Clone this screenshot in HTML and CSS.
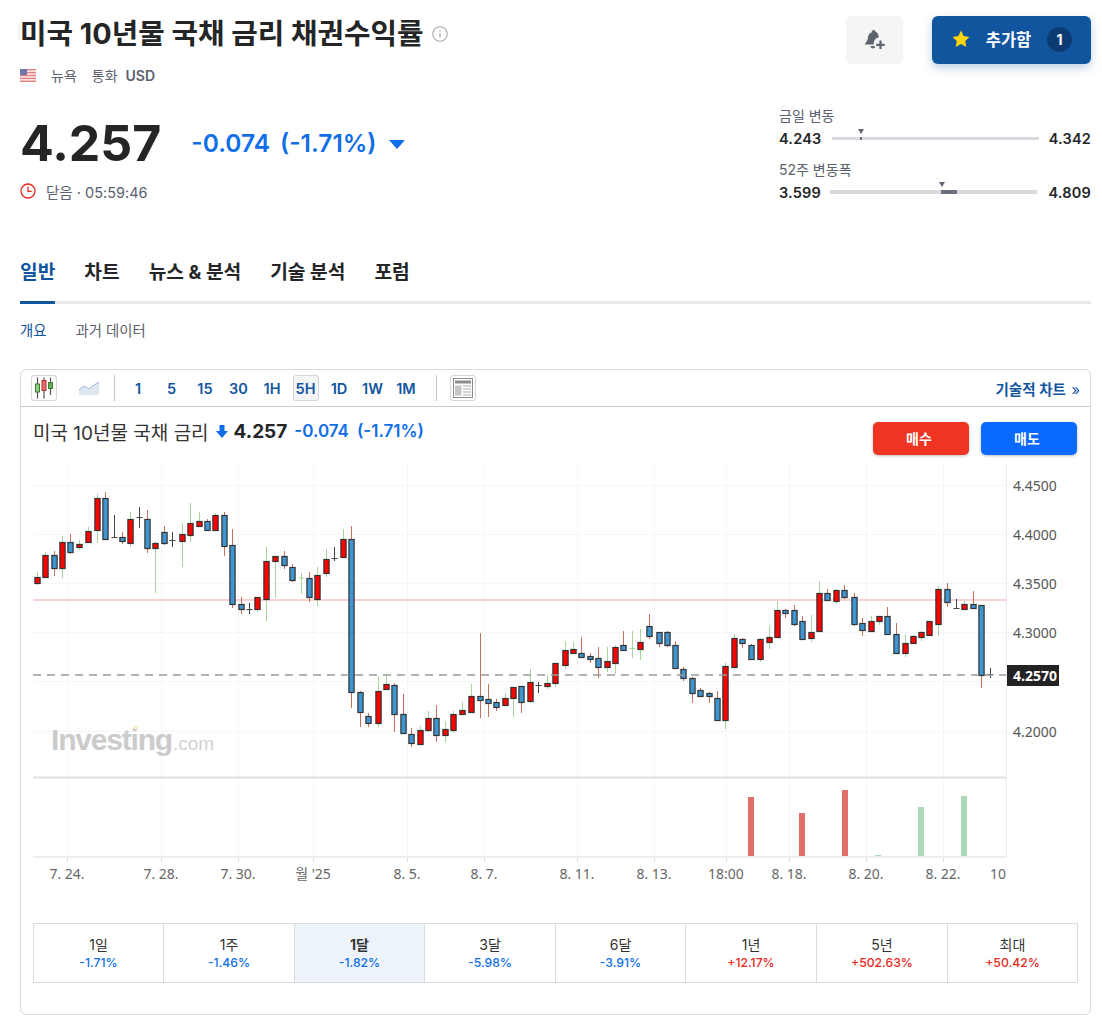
FILE: index.html
```html
<!DOCTYPE html>
<html lang="ko">
<head>
    <meta charset="UTF-8">
    <meta name="viewport" content="width=device-width, initial-scale=1.0">
    <title>미국 10년물 국채 금리 채권수익률</title>
    <link rel="stylesheet" href="styles.css">
</head>
<body>
    <div class="page">
        <header class="top">
            <div class="top-left">
                <div class="title-row">
                    <h1>미국 10년물 국채 금리 채권수익률</h1>
                    <svg class="info-icon" viewBox="0 0 16 16" width="16" height="16">
                        <circle cx="8" cy="8" r="7.2" fill="none" stroke="#a8abb2" stroke-width="1.1"/>
                        <rect x="7.4" y="7" width="1.2" height="4.8" fill="#a8abb2"/>
                        <rect x="7.4" y="4.3" width="1.2" height="1.3" fill="#a8abb2"/>
                    </svg>
                </div>
                <div class="meta-row">
                    <svg class="flag" viewBox="0 0 16 13" width="16" height="13">
                        <rect width="16" height="13" fill="#fbeaea"/>
                        <rect y="0" width="16" height="1.4" fill="#e58080"/>
                        <rect y="2.9" width="16" height="1.4" fill="#e58080"/>
                        <rect y="5.8" width="16" height="1.4" fill="#e58080"/>
                        <rect y="8.7" width="16" height="1.4" fill="#e58080"/>
                        <rect y="11.6" width="16" height="1.4" fill="#e58080"/>
                        <rect width="7" height="6" fill="#6f78a8"/>
                    </svg>
                    <span class="meta-city">뉴욕</span>
                    <span class="meta-label">통화</span>
                    <strong>USD</strong>
                </div>
                <div class="price-row">
                    <span class="price">4.257</span>
                    <span class="change">-0.074</span>
                    <span class="change change-pct">(-1.71%)</span>
                    <span class="change-arrow"></span>
                </div>
                <div class="clock-row">
                    <svg viewBox="0 0 16 16" width="16" height="16">
                        <circle cx="8" cy="8" r="7" fill="none" stroke="#e8291c" stroke-width="1.3"/>
                        <path d="M8 3.8V8.4H11.6" fill="none" stroke="#e8291c" stroke-width="1.3"/>
                    </svg>
                    <span>닫음 · 05:59:46</span>
                </div>
            </div>
            <div class="top-right">
                <div class="actions">
                    <button class="bell-btn" type="button" aria-label="알림">
                        <svg viewBox="0 0 24 24" width="24" height="24">
                            <path d="M10.500 2c1 0 1.700.7 1.800 1.600 1.900.8 3 2.300 3.200 4.300l.1 1.700a6 6 0 0 0-4.900 7H2.800c-.8 0-1.100-.9-.5-1.400 1.400-1.300 2.200-2.500 2.500-4.600l.3-2.300c.2-1.800 1.300-3.100 3.400-3.900.2-1.400 1-2.400 2-2.400z" fill="#5f6570"/>
                            <path d="M7.400 18h4c.2.500.4.900.700 1.200-.6.800-1.300 1.200-2.200 1.200-1.300 0-2.200-.9-2.500-2.400z" fill="#5f6570"/>
                            <path d="M17.500 12.500v8.500M13.200 16.800h8.500" stroke="#5f6570" stroke-width="2.200" fill="none"/>
                        </svg>
                    </button>
                    <button class="watch-btn" type="button">
                        <svg viewBox="0 0 18 18" width="18" height="18">
                            <path d="M9 .6l2.600 5.500 5.900.8-4.300 4.100 1.100 6-5.300-2.900-5.300 2.900 1.100-6L.5 6.900l5.900-.8z" fill="#ffd60a"/>
                        </svg>
                        <span>추가함</span>
                        <span class="watch-count">1</span>
                    </button>
                </div>
                <div class="range">
                    <div class="range-label">금일 변동</div>
                    <div class="range-row">
                        <strong>4.243</strong>
                        <div class="track">
                            <span class="track-fill fill-day"></span>
                            <span class="track-mark mark-day"></span>
                        </div>
                        <strong>4.342</strong>
                    </div>
                </div>
                <div class="range">
                    <div class="range-label">52주 변동폭</div>
                    <div class="range-row">
                        <strong>3.599</strong>
                        <div class="track track-year">
                            <span class="track-fill fill-year"></span>
                            <span class="track-mark mark-year"></span>
                        </div>
                        <strong>4.809</strong>
                    </div>
                </div>
            </div>
        </header>

        <nav class="tabs">
            <a class="active" href="#">일반</a>
            <a href="#">차트</a>
            <a href="#">뉴스 &amp; 분석</a>
            <a href="#">기술 분석</a>
            <a href="#">포럼</a>
        </nav>
        <nav class="subtabs">
            <a class="active" href="#">개요</a>
            <a href="#">과거 데이터</a>
        </nav>

        <section class="chart-card">
            <div class="toolbar">
                <span class="tool-icon tool-box">
                    <svg viewBox="0 0 24 24" width="24" height="24">
                        <path d="M5.500 1.500V22.500M12 1.500V22.500M18.500 1.500V19" stroke="#555" stroke-width="1.200"/>
                        <rect x="3.500" y="8" width="4" height="8" fill="#8fcf7f" stroke="#3d7a35"/>
                        <rect x="10" y="4.500" width="4" height="10" fill="#f06a6a" stroke="#a33"/>
                        <rect x="16.500" y="6.500" width="4" height="6" fill="#5fb04f" stroke="#3d7a35"/>
                    </svg>
                </span>
                <span class="tool-icon tool-area">
                    <svg viewBox="0 0 22 16" width="22" height="16">
                        <path d="M1 10L6 6L11 9L16 5L21 2V15H1Z" fill="#dfe7f3"/>
                        <path d="M1 10L6 6L11 9L16 5L21 2" fill="none" stroke="#9db4d6" stroke-width="1"/>
                    </svg>
                </span>
                <span class="tool-sep"></span>
                <div class="intervals">
                    <button type="button">1</button>
                    <button type="button">5</button>
                    <button type="button">15</button>
                    <button type="button">30</button>
                    <button type="button">1H</button>
                    <button type="button" class="selected">5H</button>
                    <button type="button">1D</button>
                    <button type="button">1W</button>
                    <button type="button">1M</button>
                </div>
                <span class="tool-sep tool-sep-end"></span>
                <span class="tool-icon tool-box tool-layout">
                    <svg viewBox="0 0 20 20" width="20" height="20">
                        <rect x=".5" y=".5" width="19" height="19" fill="#fff" stroke="#8d8d8d"/>
                        <rect x="2" y="2.500" width="16" height="3" fill="#8d8d8d"/>
                        <rect x="2" y="7.500" width="6.500" height="10" fill="#c4c4c4"/>
                        <path d="M10 8h8M10 11h8M10 14h8M10 17h8" stroke="#a8a8a8"/>
                    </svg>
                </span>
                <a class="tech-link" href="#">기술적 차트 <span>»</span></a>
            </div>

            <div class="chart-head">
                <div class="legend">
                    <span class="legend-name">미국 10년물 국채 금리</span>
                    <svg class="legend-arrow" viewBox="0 0 12 13" width="12" height="13">
                        <path d="M3.500 0H8.500V6H12L6 13L0 6H3.500Z" fill="#0f6ee8"/>
                    </svg>
                    <strong class="legend-price">4.257</strong>
                    <span class="legend-change">-0.074</span>
                    <span class="legend-change legend-pct">(-1.71%)</span>
                </div>
                <div class="trade-btns">
                    <button class="buy" type="button">매수</button>
                    <button class="sell" type="button">매도</button>
                </div>
            </div>

            <svg id="plot" class="plot" viewBox="21 464 1069 430" width="1069" height="430">
                <defs>
                    <clipPath id="axisClip"><rect x="21" y="860" width="985" height="30"/></clipPath>
                </defs>
                <g id="grid"></g>
                <text class="wm-main" x="51" y="750">Investing</text>
                <text class="wm-sub" x="173" y="750">.com</text>
                <rect class="wm-dot" x="133" y="726" width="5" height="3"/>
                <line class="level-line" x1="33" y1="600" x2="1006" y2="600"/>
                <g id="candles"></g>
                <line class="last-line" x1="33" y1="675" x2="1006" y2="675"/>
                <line class="pane-line" x1="33" y1="777.500" x2="1006" y2="777.500"/>
                <g id="volume"></g>
                <line class="axis-line" x1="33" y1="857" x2="1006" y2="857"/>
                <line class="axis-line-right" x1="1006.500" y1="464" x2="1006.500" y2="858"/>
                <g class="price-axis">
                    <text x="1013" y="491">4.4500</text>
                    <text x="1013" y="540">4.4000</text>
                    <text x="1013" y="588.500">4.3500</text>
                    <text x="1013" y="637.500">4.3000</text>
                    <text x="1013" y="737">4.2000</text>
                </g>
                <rect class="last-box" x="1007" y="665" width="52" height="21"/>
                <text class="last-label" x="1013" y="681">4.2570</text>
                <g class="time-axis" clip-path="url(#axisClip)">
                    <text x="67" y="879">7. 24.</text>
                    <text x="161" y="879">7. 28.</text>
                    <text x="238" y="879">7. 30.</text>
                    <text x="313" y="879">월 '25</text>
                    <text x="407" y="879">8. 5.</text>
                    <text x="484" y="879">8. 7.</text>
                    <text x="577" y="879">8. 11.</text>
                    <text x="654" y="879">8. 13.</text>
                    <text x="726" y="879">18:00</text>
                    <text x="789" y="879">8. 18.</text>
                    <text x="866" y="879">8. 20.</text>
                    <text x="943" y="879">8. 22.</text>
                    <text x="1008" y="879">10:00</text>
                </g>
            </svg>

            <div class="periods">
                <div class="period"><span>1일</span><em class="down">-1.71%</em></div>
                <div class="period"><span>1주</span><em class="down">-1.46%</em></div>
                <div class="period current"><span>1달</span><em class="down">-1.82%</em></div>
                <div class="period"><span>3달</span><em class="down">-5.98%</em></div>
                <div class="period"><span>6달</span><em class="down">-3.91%</em></div>
                <div class="period"><span>1년</span><em class="up">+12.17%</em></div>
                <div class="period"><span>5년</span><em class="up">+502.63%</em></div>
                <div class="period"><span>최대</span><em class="up">+50.42%</em></div>
            </div>
        </section>
    </div>

    <script src="chart.js"></script>
</body>
</html>
```

FILE: styles.css
```css
* {
    margin: 0;
    padding: 0;
    box-sizing: border-box;
}

body {
    font-family: "Inter", "Noto Sans CJK KR", sans-serif;
    background-color: #fff;
    color: #232526;
}

a {
    text-decoration: none;
}

button {
    font-family: inherit;
    border: none;
    cursor: pointer;
}

.page {
    padding: 16px 11px 20px 20px;
}

.top {
    display: flex;
    justify-content: space-between;
    height: 233px;
}

.title-row {
    display: flex;
    align-items: center;
    gap: 8px;
    height: 36px;
}

h1 {
    font-size: 28.800px;
    font-weight: 700;
    line-height: 34px;
}

.meta-row {
    display: flex;
    align-items: center;
    margin-top: 14px;
    height: 18px;
    font-size: 14px;
    color: #5b616e;
}

.flag {
    margin-right: 15px;
}

.meta-city {
    margin-right: 15px;
}

.meta-label {
    margin-right: 8px;
}

.meta-row strong {
    font-weight: 600;
}

.price-row {
    display: flex;
    align-items: center;
    margin-top: 29px;
    height: 60px;
}

.price {
    font-size: 50px;
    font-weight: 700;
    line-height: 60px;
    margin-right: 30px;
}

.change {
    font-size: 24.500px;
    font-weight: 600;
    color: #0f6ee8;
}

.change-pct {
    margin-left: 10px;
}

.change-arrow {
    width: 0;
    height: 0;
    margin-left: 12px;
    margin-top: 2px;
    border-left: 8px solid transparent;
    border-right: 8px solid transparent;
    border-top: 9px solid #0f6ee8;
}

.clock-row {
    display: flex;
    align-items: center;
    gap: 10px;
    margin-top: 8px;
    height: 20px;
    font-size: 14.500px;
    color: #5b616e;
}

.top-right {
    width: 312px;
    display: flex;
    flex-direction: column;
}

.actions {
    display: flex;
    justify-content: flex-end;
    gap: 29px;
    height: 48px;
    margin-bottom: 43px;
}

.bell-btn {
    width: 57px;
    height: 48px;
    background: #f5f5f6;
    border-radius: 5px;
    display: flex;
    align-items: center;
    justify-content: center;
}

.watch-btn {
    width: 159px;
    height: 48px;
    background: #12559f;
    border-radius: 6px;
    box-shadow: 0 4px 10px rgba(18, 85, 159, 0.28);
    color: #fff;
    font-size: 16.500px;
    font-weight: 700;
    display: flex;
    align-items: center;
    padding: 0 19px 2px 20px;
    justify-content: space-between;
}

.watch-count {
    width: 25px;
    height: 25px;
    border-radius: 50%;
    background: #0c3b73;
    display: flex;
    align-items: center;
    justify-content: center;
    font-size: 14px;
}

.range {
    height: 54px;
}

.range-label {
    font-size: 14px;
    line-height: 18px;
    color: #5b616e;
}

.range-row {
    display: flex;
    align-items: center;
    justify-content: space-between;
    height: 26px;
    font-size: 14.500px;
}

.range-row strong {
    font-weight: 600;
    letter-spacing: 0.2px;
}

.track {
    position: relative;
    width: 207px;
    height: 3px;
    background: #d9dadf;
}

.track-year {
    height: 4px;
    margin-right: 2px;
}

.track-fill {
    position: absolute;
    top: 0;
    height: 100%;
    background: #6a707c;
}

.fill-day {
    left: 28px;
    width: 2px;
}

.fill-year {
    left: 111px;
    width: 16px;
}

.track-mark {
    position: absolute;
    top: -8px;
    width: 0;
    height: 0;
    border-left: 3.500px solid transparent;
    border-right: 3.500px solid transparent;
    border-top: 5px solid #5f6570;
}

.mark-day {
    left: 26px;
}

.mark-year {
    left: 109px;
}

.tabs {
    display: flex;
    gap: 29px;
    border-bottom: 3px solid #e6e8ec;
    height: 55px;
}

.tabs a {
    font-size: 19.200px;
    font-weight: 700;
    color: #232526;
    line-height: 47px;
    height: 55px;
}

.tabs a.active {
    color: #12559f;
    border-bottom: 3px solid #12559f;
}

.subtabs {
    display: flex;
    gap: 29px;
    margin-top: 17px;
    height: 20px;
    margin-bottom: 28px;
}

.subtabs a {
    font-size: 14.400px;
    line-height: 20px;
    color: #5b616e;
}

.subtabs a.active {
    color: #12559f;
}

.chart-card {
    border: 1px solid #d9dadf;
    border-radius: 6px;
    height: 646px;
}

.toolbar {
    display: flex;
    align-items: center;
    height: 37px;
    border-bottom: 1px solid #c9cacd;
    padding-left: 10px;
}

.tool-icon {
    display: flex;
    align-items: center;
    justify-content: center;
}

.tool-box {
    width: 26px;
    height: 26px;
    border: 1px solid #d6d6d6;
    border-radius: 3px;
}

.tool-area {
    width: 22px;
    height: 16px;
    margin-left: 21px;
}

.tool-sep {
    width: 1px;
    height: 26px;
    background: #c6c6c6;
    margin-left: 14px;
}

.tool-sep-end {
    margin-left: 17px;
}

.tool-layout {
    margin-left: 13px;
}

.intervals {
    display: flex;
    gap: 7.500px;
    margin-left: 10px;
}

.intervals button {
    width: 26px;
    height: 26px;
    background: transparent;
    border-radius: 3px;
    color: #12559f;
    font-size: 14.500px;
    font-weight: 600;
}

.intervals button.selected {
    background: #f4f5f6;
    border: 1px solid #d6d6d6;
}

.tech-link {
    margin-left: auto;
    margin-right: 10px;
    font-size: 14.500px;
    font-weight: 600;
    color: #12559f;
}

.tech-link span {
    font-weight: 400;
    margin-left: 2px;
}

.chart-head {
    display: flex;
    justify-content: space-between;
    height: 57px;
    padding: 11px 13px 0 12px;
}

.legend {
    display: flex;
    align-items: center;
    height: 26px;
}

.legend-name {
    font-size: 19px;
    color: #333;
}

.legend-arrow {
    margin-left: 7px;
}

.legend-price {
    margin-left: 6px;
    font-size: 19px;
    font-weight: 700;
}

.legend-change {
    margin-left: 7px;
    font-size: 17px;
    font-weight: 600;
    color: #0f6ee8;
}

.legend-pct {
    margin-left: 8px;
}

.trade-btns {
    display: flex;
    gap: 12px;
    margin-top: 4px;
}

.trade-btns button {
    width: 96px;
    height: 33px;
    padding: 0 4px 2px 0;
    border-radius: 5px;
    color: #fff;
    font-size: 14px;
    font-weight: 700;
    box-shadow: 0 1px 3px rgba(0, 0, 0, 0.25);
}

.buy {
    background: #ee3524;
}

.sell {
    background: #0a69ff;
}

.plot {
    display: block;
    font-family: "Noto Sans", "Noto Sans CJK KR", sans-serif;
}

.grid-line {
    stroke: #f6f6f8;
    stroke-width: 1;
}

.wm-main {
    font-family: "Liberation Sans", sans-serif;
    font-size: 30px;
    font-weight: 700;
    letter-spacing: -1.200px;
    fill: #cbcbcb;
}

.wm-sub {
    font-family: "Liberation Sans", sans-serif;
    font-size: 19px;
    fill: #d2d2d2;
}

.wm-dot {
    fill: #fbeccd;
}

.level-line {
    stroke: #fbd2d2;
    stroke-width: 2;
}

.last-line {
    stroke: #9a9a9a;
    stroke-width: 1.500;
    stroke-dasharray: 8 6;
}

.pane-line {
    stroke: #dfe0e2;
    stroke-width: 2;
}

.axis-line {
    stroke: #eceef2;
    stroke-width: 2;
}

.axis-line-right {
    stroke: #eceef2;
    stroke-width: 1;
}

.axis-tick {
    stroke: #d8dade;
    stroke-width: 1;
}

.price-axis text {
    font-size: 14px;
    fill: #555;
}

.last-box {
    fill: #222;
}

.last-label {
    font-size: 14px;
    font-weight: 700;
    fill: #fff;
}

.time-axis text {
    font-size: 14px;
    fill: #666;
    text-anchor: middle;
}

.periods {
    display: grid;
    grid-template-columns: 130px 131px 130px 131px 130px 131px 131px 1fr;
    margin: 29px 12px 0;
    border: 1px solid #d9dbdf;
    height: 60px;
}

.period {
    display: flex;
    flex-direction: column;
    align-items: center;
    justify-content: center;
    border-right: 1px solid #d9dbdf;
    font-size: 14px;
    color: #333;
    line-height: 20px;
}

.period:last-child {
    border-right: none;
}

.period.current {
    background: #edf3fa;
    font-weight: 700;
}

.period em {
    font-style: normal;
    font-size: 12.200px;
    font-weight: 500;
    line-height: 16px;
}

.down {
    color: #0f6ee8;
}

.up {
    color: #e8291c;
}
```

FILE: chart.js
```js
// x, wick top, body top, body bottom, wick bottom, kind
// r = up (red body), b = down (blue body), d = dark doji, g = green doji
const candles = [
    [37,572,577,583,585,'r'],[45.3,552,555,577,578,'r'],[54,551,555,568,576,'b'],[62.3,536,542,568,578,'r'],
    [70.7,534,542,552,554,'b'],[79,540,544,547,550,'r'],[88.7,527,531,542,543,'r'],[97,494,498,530,543,'r'],
    [105.7,492,498,539,539,'b'],[114,515,537,538,538,'d'],[122.3,532,537,541,544,'b'],[130.7,512,519,543,547,'r'],
    [139,507,517,518,528,'d'],[147.3,510,519,548,553,'b'],[155.7,541,543,548,593,'r'],[164,526,532,543,545,'b'],
    [172.7,532,540,541,547,'d'],[182.3,523,534,541,567,'r'],[190.7,503,523,535,542,'r'],[199,512,521,526,527,'r'],
    [207.3,519,521,530,531,'b'],[215.7,513,515,530,531,'r'],[224,512,515,546,556,'b'],[232.7,529,545,604,608,'b'],
    [241,597,604,609,614,'b'],[249.3,603,609,611,614,'d'],[257.7,597,597,609,612,'r'],[266,547,561,599,621,'r'],
    [275.7,556,556,561,598,'r'],[284,551,556,565,569,'b'],[292.7,564,567,580,582,'b'],[301,573,577.5,578,594,'g'],
    [309.3,572,578,597,602,'b'],[317.7,567,575,599,606,'r'],[326,549,559,573,577,'r'],[334.7,547,558,559,561,'d'],
    [343,529,539,557,557,'r'],[351.3,526,539,692,708,'b'],[360,691,692,712,727,'b'],[368.3,713,716,723,727,'b'],
    [378,676,691,723,727,'r'],[386.3,674,684,689,689,'r'],[394.7,683,685,714,732,'b'],[403,694,714,733,733,'b'],
    [411.3,728,734,743,747,'b'],[420,726,730,744,744,'r'],[428.3,711,718,730,732,'r'],[436.7,705,718,735,742,'b'],
    [445,721,729,735,742,'r'],[453.3,711,714,730,733,'r'],[462,702,710,714,714,'r'],[471.3,684,696,712,712,'r'],
    [480,633,696,700,718,'b'],[488.3,684,699,703,717,'b'],[496.7,699,702,707,711,'b'],[505,693,698,705,706,'r'],
    [513.3,687,687,698,717,'r'],[521.7,686,686,702,713,'b'],[530.3,669,682,701,703,'r'],[538.7,682,685,686,693,'d'],
    [547,675,683,686,689,'r'],[555.3,663,663,683,687,'r'],[565,641,650,665,669,'r'],[573.3,642,649,653,653,'r'],
    [581.7,637,653,657,657,'b'],[590,653,656,659,663,'b'],[598.7,647,658,667,678,'b'],[607,647,661,667,672,'r'],
    [615.3,645,647,663,674,'r'],[623.7,631,645,650,651,'b'],[632.3,631,648,649,658,'g'],[640.7,629,642,649,660,'r'],
    [649,614,626,636,639,'b'],[659,632,632,643,647,'b'],[667.3,631,632,645,647,'b'],[675.7,641,645,668,669,'b'],
    [683.7,667,669,678,681,'b'],[692,677,678,693,703,'b'],[700.7,688,690,696,697,'b'],[709,692,693,696,703,'b'],
    [717.3,691,698,720,720,'b'],[725.7,663,666,720,729,'r'],[734,634,638,667,669,'r'],[742.7,638,639,643,648,'b'],
    [751,644,645,659,660,'b'],[760.7,638,639,659,662,'r'],[769,626,637,642,649,'r'],[777.3,601,610,637,637,'r'],
    [785.7,609,610,613,618,'b'],[794,605,610,624,626,'b'],[802.7,616,621,639,639,'b'],[811,615,632,638,642,'r'],
    [819.3,581,593,631,631,'r'],[827.7,589,593,600,601,'b'],[836,589,590,601,604,'r'],[844.7,585,590,597,599,'b'],
    [854,593,597,624,626,'b'],[862.7,618,623,630,636,'b'],[871,616,621,631,632,'r'],[879.3,616,616,621,625,'r'],
    [887.7,607,616,634,635,'b'],[896,623,634,653,653,'b'],[905,634,643,653,657,'r'],[913,635,636,643,644,'r'],
    [921.3,631,632,637,641,'r'],[929.7,621,621,635,635,'r'],[938.3,586,589,624,636,'r'],[947.7,583,589,602,607,'b'],
    [956.3,599,608,609,609,'d'],[964.7,600,604,609,609,'r'],[973,591,604,608,608,'b'],[981.7,605,605,675,688,'b'],
    [990,668,674,675,678,'d']
];

// x, top, colour
const volumes = [
    [751,797,'#e06f6c'],[802,813,'#e06f6c'],[845,790,'#e06f6c'],
    [878,855,'#abd9b5'],[921,807,'#abd9b5'],[964,796,'#abd9b5']
];

const gridX = [67, 161, 238, 313, 407, 484, 577, 654, 726, 789, 866, 943];
const gridY = [485, 534, 583, 632, 681, 731];

const wickColors = { r: '#a8d59c', b: '#c9705c', d: '#444', g: '#a8d59c' };
const bodyColors = { r: '#ff0000', b: '#3f95d0' };

function el(parent, tag, attrs) {
    const node = document.createElementNS('http://www.w3.org/2000/svg', tag);
    for (const key in attrs) {
        node.setAttribute(key, attrs[key]);
    }
    parent.appendChild(node);
    return node;
}

const grid = document.getElementById('grid');
gridX.forEach(function(x) {
    el(grid, 'line', { class: 'grid-line', x1: x + 0.5, y1: 464, x2: x + 0.5, y2: 857 });
    el(grid, 'line', { class: 'axis-tick', x1: x + 0.5, y1: 857, x2: x + 0.5, y2: 862 });
});
gridY.forEach(function(y) {
    el(grid, 'line', { class: 'grid-line', x1: 33, y1: y + 0.5, x2: 1006, y2: y + 0.5 });
});

const layer = document.getElementById('candles');
candles.forEach(function(c) {
    const x = Math.floor(c[0]) + 0.5;
    const kind = c[5];
    el(layer, 'line', { x1: x, y1: c[1], x2: x, y2: c[4], stroke: wickColors[kind], 'stroke-width': 1 });
    if (kind === 'd' || kind === 'g') {
        el(layer, 'line', { x1: x - 3, y1: c[2] + 0.5, x2: x + 3, y2: c[2] + 0.5, stroke: wickColors[kind], 'stroke-width': 1 });
    } else {
        el(layer, 'rect', {
            x: x - 2.6, y: c[2] + 0.5, width: 5.2, height: Math.max(c[3] - c[2], 1),
            fill: bodyColors[kind], stroke: '#333', 'stroke-width': 1.2
        });
    }
});

const volumeLayer = document.getElementById('volume');
volumes.forEach(function(v) {
    el(volumeLayer, 'rect', { x: v[0] - 3, y: v[1], width: 6, height: 857 - v[1], fill: v[2] });
});
```
